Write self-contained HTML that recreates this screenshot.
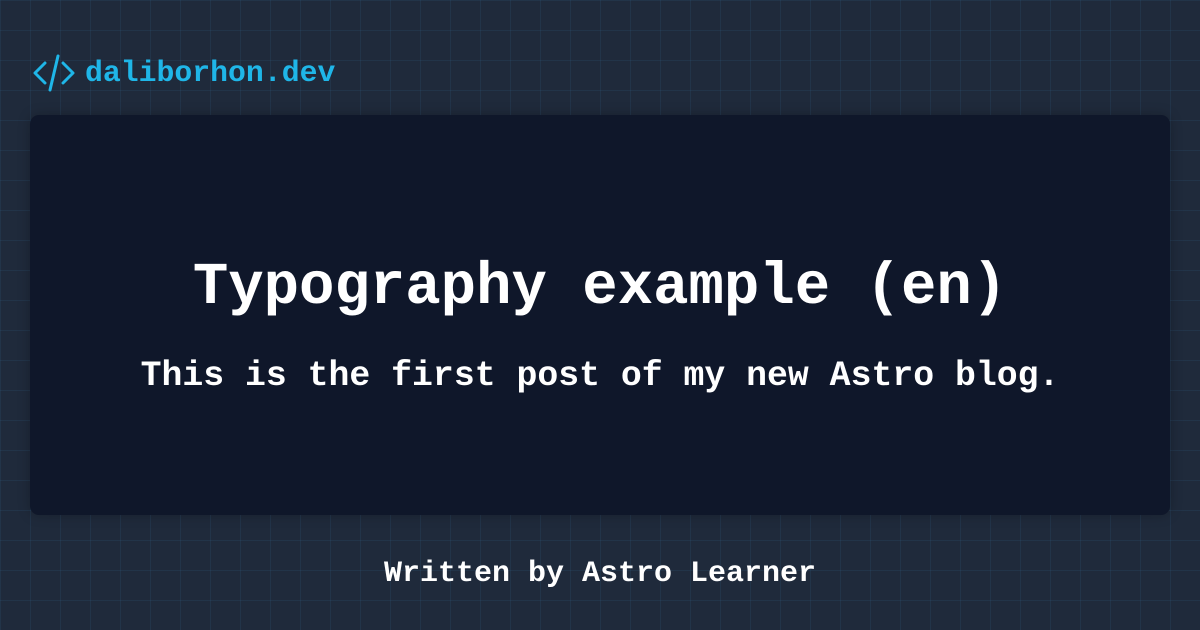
<!DOCTYPE html>
<html><head><style>
html,body{margin:0;padding:0}
body{width:1200px;height:630px;overflow:hidden;position:relative;background-color:#1f2a3b;
background-image:linear-gradient(to right,rgba(56,120,170,0.12) 1px,transparent 1px),linear-gradient(to bottom,rgba(56,120,170,0.12) 1px,transparent 1px);
background-size:30px 30px;background-position:0 0;font-family:"Liberation Mono",monospace;font-weight:bold}
.logo{position:absolute;left:33px;top:53px;display:flex;align-items:center;color:#1fb6e8;font-size:29.8px}
.logo svg{margin-right:10px}
.card{position:absolute;left:30px;top:115px;width:1140px;height:400px;background:#0f172a;border-radius:9px;box-shadow:0 0 12px rgba(0,0,0,0.25)}
.t{position:absolute;left:0;width:1200px;text-align:center;color:#fff;white-space:nowrap}
</style></head><body>
<div class="logo"><svg width="42" height="40" viewBox="0 0 42 40" fill="none" stroke="#1fb6e8" stroke-width="3" stroke-linecap="round" stroke-linejoin="round"><path d="M12 10 L2 20 L12 30"/><path d="M30 10 L40 20 L30 30"/><path d="M25 3 L17 37"/></svg>daliborhon.dev</div>
<div class="card"></div>
<div class="t" style="top:252px;font-size:59px;line-height:72px">Typography example (en)</div>
<div class="t" style="top:356px;font-size:34.8px;line-height:42px">This is the first post of my new Astro blog.</div>
<div class="t" style="top:556px;font-size:30px;line-height:36px">Written by Astro Learner</div>
</body></html>
